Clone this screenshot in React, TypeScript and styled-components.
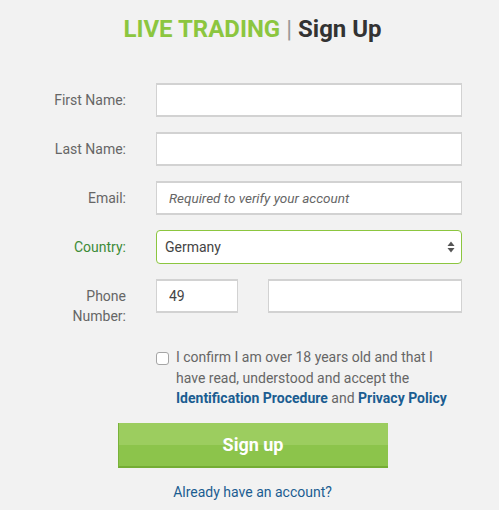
import React, { FC, useState } from "react";
import styled, { createGlobalStyle } from "styled-components";

const GlobalStyle = createGlobalStyle`
  body {
    margin: 0;
    background: #f2f2f2;
    font-family: Roboto, "Liberation Sans", sans-serif;
  }
`;

const StyledPage = styled.div`
  width: 505px;
  padding-top: 15px;
  display: flex;
  flex-direction: column;
  align-items: center;
`;
const StyledTitle = styled.h1`
  margin: 0;
  font-size: 24px;
  line-height: 28px;
  font-weight: 700;
  color: #333333;
`;
const StyledTitleGreen = styled.span`
  color: #8cc63f;
`;
const StyledTitlePipe = styled.span`
  color: #999999;
  font-weight: 400;
`;
const StyledForm = styled.form`
  align-self: stretch;
  margin-top: 40px;
  display: grid;
  grid-template-columns: 126px 306px;
  column-gap: 30px;
  row-gap: 15px;
`;
const StyledLabel = styled.label<{ $active?: boolean }>`
  padding-top: 7px;
  font-size: 14px;
  line-height: 20px;
  text-align: right;
  color: ${(p) => (p.$active ? "#3d8b37" : "#666666")};
`;
const StyledInput = styled.input`
  box-sizing: border-box;
  width: 100%;
  height: 34px;
  padding: 0 12px;
  border: 2px solid #d2d2d2;
  border-width: 2px 1.5px;
  background: #ffffff;
  font-family: inherit;
  font-size: 14px;
  color: #444444;
  outline: none;

  &::placeholder {
    font-style: italic;
    font-size: 13.5px;
    color: #666666;
  }
`;
const StyledSelectWrap = styled.div`
  position: relative;
`;
const StyledSelect = styled.select`
  box-sizing: border-box;
  width: 100%;
  height: 34px;
  padding: 0 8px;
  appearance: none;
  border: 1px solid #8cc63f;
  border-radius: 4px;
  background: #ffffff;
  font-family: inherit;
  font-size: 14px;
  color: #444444;
  outline: none;
`;
const StyledArrows = styled.svg`
  position: absolute;
  right: 7px;
  top: 11px;
  pointer-events: none;
`;
const StyledPhoneRow = styled.div`
  display: grid;
  grid-template-columns: 82px 194px;
  column-gap: 30px;
`;
const StyledConfirm = styled.div`
  grid-column: 2;
  margin-top: 6px;
  display: flex;
  gap: 7px;
`;
const StyledCheckbox = styled.span`
  flex: none;
  box-sizing: border-box;
  width: 13px;
  height: 13px;
  margin-top: 5px;
  border: 1px solid #a5a5a5;
  border-radius: 3px;
  background: #ffffff;
`;
const StyledConfirmText = styled.p`
  margin: 0;
  font-size: 14px;
  line-height: 20.5px;
  color: #666666;
`;
const StyledBoldLink = styled.a`
  color: #1b5d91;
  font-weight: 700;
  text-decoration: none;
`;
const StyledButton = styled.button`
  margin-top: 14px;
  width: 270px;
  height: 45px;
  border: none;
  border-left: 1px solid #79b23a;
  border-bottom: 2px solid #74ad34;
  background: linear-gradient(#9ccd5f 0%, #9ccd5f 50%, #8cc44b 50%, #8cc44b 100%);
  font-family: inherit;
  font-size: 18px;
  font-weight: 700;
  color: #ffffff;
  cursor: pointer;
`;
const StyledLink = styled.a`
  margin-top: 14px;
  font-size: 14px;
  line-height: 20px;
  color: #1b5d91;
  text-decoration: none;
`;

const App: FC = () => {
  const [country, setCountry] = useState("Germany");

  return (
    <StyledPage>
      <GlobalStyle />
      <StyledTitle>
        <StyledTitleGreen>LIVE TRADING</StyledTitleGreen> <StyledTitlePipe>|</StyledTitlePipe> Sign Up
      </StyledTitle>
      <StyledForm onSubmit={(e) => e.preventDefault()}>
        <StyledLabel>First Name:</StyledLabel>
        <StyledInput type="text" />
        <StyledLabel>Last Name:</StyledLabel>
        <StyledInput type="text" />
        <StyledLabel>Email:</StyledLabel>
        <StyledInput type="email" placeholder="Required to verify your account" />
        <StyledLabel $active>Country:</StyledLabel>
        <StyledSelectWrap>
          <StyledSelect value={country} onChange={(e) => setCountry(e.target.value)}>
            <option>Germany</option>
            <option>Austria</option>
            <option>Switzerland</option>
          </StyledSelect>
          <StyledArrows width="8" height="12" viewBox="0 0 8 12">
            <path d="M4 0.5 L7.5 5 L0.5 5 Z" fill="#555" />
            <path d="M4 11.5 L7.5 7 L0.5 7 Z" fill="#555" />
          </StyledArrows>
        </StyledSelectWrap>
        <StyledLabel>
          Phone
          <br />
          Number:
        </StyledLabel>
        <StyledPhoneRow>
          <StyledInput type="text" defaultValue="49" />
          <StyledInput type="tel" />
        </StyledPhoneRow>
        <StyledConfirm>
          <StyledCheckbox />
          <StyledConfirmText>
            I confirm I am over 18 years old and that I have read, understood and accept the{" "}
            <StyledBoldLink href="#">Identification Procedure</StyledBoldLink> and{" "}
            <StyledBoldLink href="#">Privacy Policy</StyledBoldLink>
          </StyledConfirmText>
        </StyledConfirm>
      </StyledForm>
      <StyledButton>Sign up</StyledButton>
      <StyledLink href="#">Already have an account?</StyledLink>
    </StyledPage>
  );
};

export default App;
